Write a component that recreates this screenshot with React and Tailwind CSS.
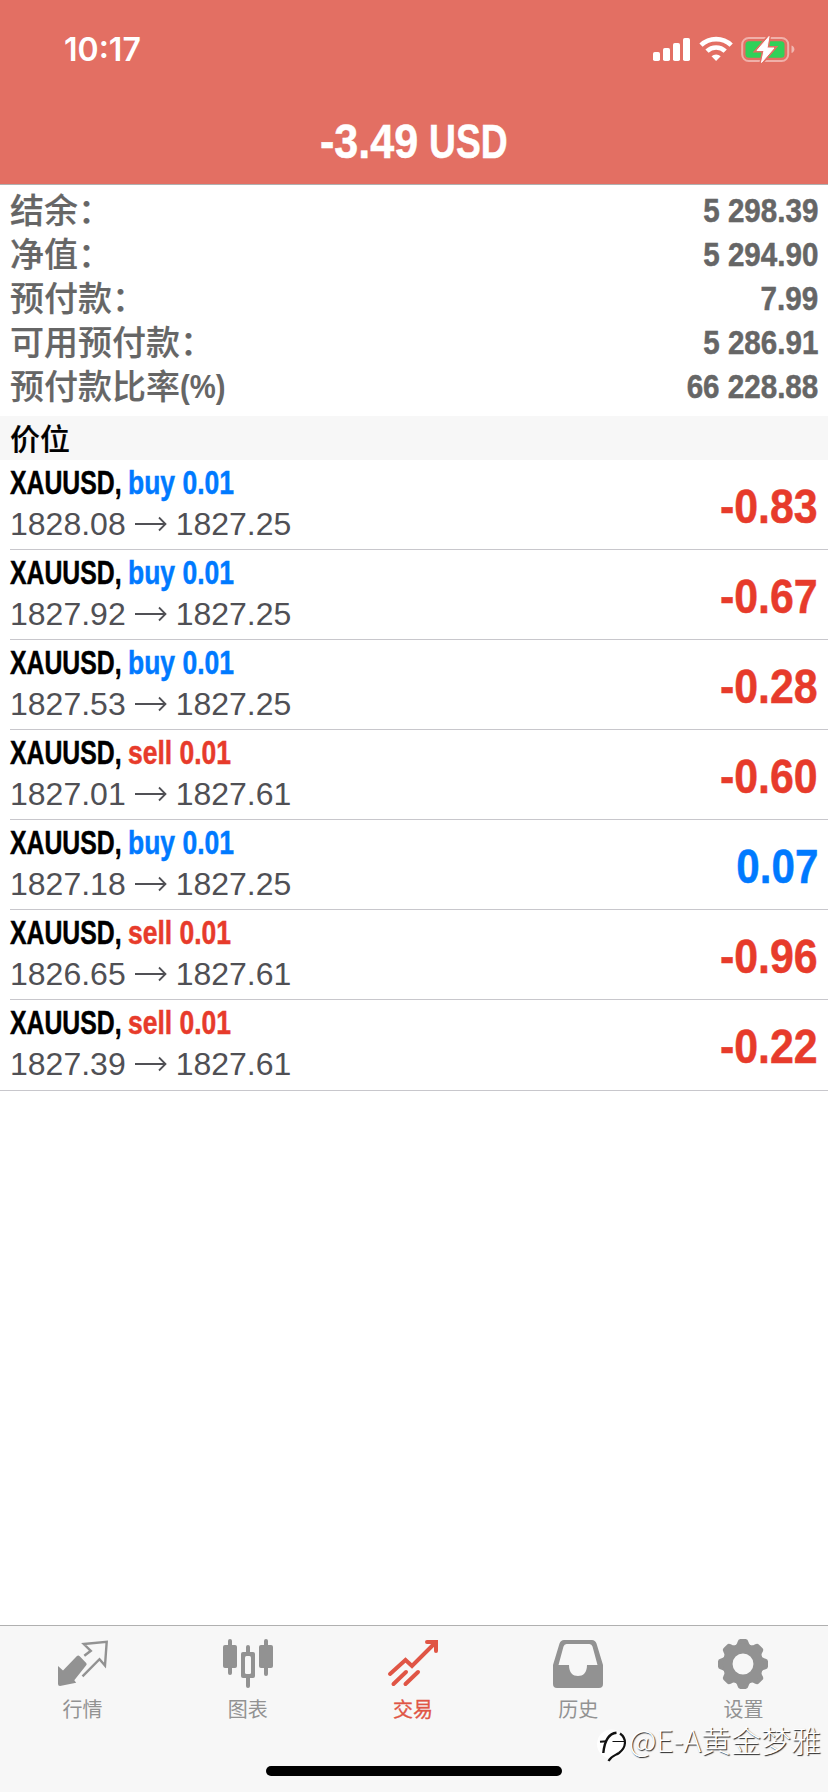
import clsx from "clsx";

const summary = [
  { label: "结余：", value: "5 298.39" },
  { label: "净值：", value: "5 294.90" },
  { label: "预付款：", value: "7.99" },
  { label: "可用预付款：", value: "5 286.91" },
  { label: "预付款比率", unit: "(%)", value: "66 228.88" },
];

const positions = [
  { side: "buy", open: "1828.08", now: "1827.25", profit: "-0.83" },
  { side: "buy", open: "1827.92", now: "1827.25", profit: "-0.67" },
  { side: "buy", open: "1827.53", now: "1827.25", profit: "-0.28" },
  { side: "sell", open: "1827.01", now: "1827.61", profit: "-0.60" },
  { side: "buy", open: "1827.18", now: "1827.25", profit: "0.07" },
  { side: "sell", open: "1826.65", now: "1827.61", profit: "-0.96" },
  { side: "sell", open: "1827.39", now: "1827.61", profit: "-0.22" },
];

// bold sans, squeezed horizontally with scale-x where it is used
const condensed = "font-['Liberation_Sans',sans-serif] font-bold whitespace-nowrap [-webkit-text-stroke:0.5px_currentColor]";

function StatusBar() {
  return (
    <div className="flex h-[100px] items-center justify-between pl-16 pr-[33px]">
      <span className="font-['Inter',sans-serif] text-[32px] font-semibold leading-none">10:17</span>
      <svg width="144" height="30" viewBox="0 0 144 30">
        <g fill="#fff">
          <rect x="2" y="17" width="7" height="9" rx="1.8" />
          <rect x="12" y="13" width="7" height="13" rx="1.8" />
          <rect x="22" y="8" width="7" height="18" rx="1.8" />
          <rect x="32" y="3" width="7" height="23" rx="1.8" />
        </g>
        <g fill="none" stroke="#fff" strokeWidth="4.6">
          <path d="M50 10.2a21.7 21.7 0 0 1 30.2 0" />
          <path d="M56 16.200a13 13 0 0 1 18.200 0" />
        </g>
        <path d="M65.100 26l-4.600-4.700a6.600 6.600 0 0 1 9.200 0z" fill="#fff" />
        <rect x="91.200" y="3" width="46" height="23" rx="6.500" fill="none" stroke="#fff" strokeOpacity=".45" strokeWidth="2" />
        <path d="M140.500 10.500c3.800 1 3.800 6.500 0 7.500z" fill="#fff" fillOpacity=".5" />
        <rect x="94.500" y="6.300" width="39" height="16.500" rx="3.500" fill="#30d158" />
        <path d="M118 1.500l-12 14h7l-2.500 12 12.500-14.500h-7z" fill="#fff" stroke="#e36f63" strokeWidth="4" />
        <path d="M118 1.500l-12 14h7l-2.500 12 12.500-14.500h-7z" fill="#fff" stroke="#fff" strokeWidth="1" strokeLinejoin="round" />
      </svg>
    </div>
  );
}

function Position({ side, open, now, profit, last }) {
  return (
    <div className={clsx("flex bg-white", last ? "h-[91px] border-b border-[#c8c7cc]" : "h-[90px] pl-[10px]")}>
      <div className={clsx("flex flex-1 justify-between pr-[10px]", last ? "pl-[10px]" : "border-b border-[#c8c7cc]")}>
        <div>
          <div className={clsx(condensed, "mt-[3px] flex text-[33.5px] leading-[40px]")}>
            <span className="w-[118px] origin-left scale-x-[0.74] text-black">XAUUSD,</span>
            <span className={clsx("w-[107px] origin-left scale-x-[0.79]", side === "buy" ? "text-[#007aff]" : "text-[#e73b2b]")}>
              {side} 0.01
            </span>
          </div>
          <div className="mt-px flex items-center font-['Liberation_Sans',sans-serif] text-[32px] leading-[40px] text-[#505055]">
            <span>{open}</span>
            <svg className="mx-[9px] -mt-px" width="32" height="16" viewBox="0 0 32 16" fill="none" stroke="#505055" strokeWidth="1.800">
              <path d="M0 8h30M24 1.500l6.500 6.500-6.500 6.500" />
            </svg>
            <span>{now}</span>
          </div>
        </div>
        <div
          className={clsx(
            condensed,
            "origin-right self-center pt-[3px] text-[49px] leading-none",
            profit[0] === "-" ? "scale-x-[0.875] text-[#e73b2b]" : "scale-x-[0.86] text-[#007aff]"
          )}
        >
          {profit}
        </div>
      </div>
    </div>
  );
}

function QuotesIcon() {
  return (
    <svg width="52" height="50" viewBox="0 0 52 50">
      <path d="M1 27l5 4.500L19.700 17.300q1.600-1.500 3 0l6.500 6.700q1 1.200 0 2.200L17.300 41.300l1.900 2.400L3 47q-2 0-2-2z" fill="#929292" />
      <path d="M27.300 16.800l6.500-5-7-6.800L49.700 2.900 48 26.500l-5.500-6.300L25.500 37.300" fill="none" stroke="#929292" strokeWidth="2.400" />
    </svg>
  );
}

function ChartIcon() {
  return (
    <svg width="52" height="50" viewBox="0 0 52 50" fill="#929292">
      <rect x="6" y="0" width="4" height="36" rx="2" />
      <rect x="1" y="6" width="14" height="23" rx="2" />
      <rect x="24" y="6" width="4" height="43" rx="2" />
      <rect x="19" y="13" width="14" height="26" rx="2" />
      <rect x="23" y="17" width="6" height="18" rx="1.5" fill="#f7f7f7" />
      <rect x="42" y="0" width="4" height="37" rx="2" />
      <rect x="37" y="6" width="14" height="23" rx="2" />
    </svg>
  );
}

function TradeIcon() {
  return (
    <svg width="52" height="50" viewBox="0 0 52 50" fill="none" stroke="#e05545" strokeWidth="4" strokeLinecap="round">
      <path d="M3 35l15.500-14 6.500 6L48 4" />
      <path d="M40 3h9v9" />
      <path d="M6.500 45L19 33M18.500 45L31 33" />
    </svg>
  );
}

function HistoryIcon() {
  return (
    <svg width="52" height="50" viewBox="0 0 52 50">
      <path
        fillRule="evenodd"
        fill="#929292"
        d="M1 26L7.500 4.500Q8.800 1 12 1h28q3.200 0 4.500 3.500L51 26v19q0 4-4 4H5q-4 0-4-4zM6.500 26h10.500c0 8 4 11 9 11s9-3 9-11h10.500L40.500 7.500Q39.700 5 37.500 5h-23q-2.200 0-3 2.500z"
      />
    </svg>
  );
}

function GearIcon() {
  const teeth = [0, 45, 90, 135, 180, 225, 270, 315];
  return (
    <svg width="52" height="50" viewBox="0 0 52 50" fill="#929292">
      {teeth.map((deg) => (
        <path key={deg} transform={`rotate(${deg} 26 25)`} d="M17 7.500C19.500 5.500 20 5 20.500 3Q21.300 0 23.300 0H28.700Q30.700 0 31.500 3C32 5 32.500 5.500 35 7.500z" />
      ))}
      <circle cx="26" cy="25" r="15.300" fill="none" stroke="#929292" strokeWidth="9.700" />
    </svg>
  );
}

const tabs = [
  { label: "行情", icon: QuotesIcon },
  { label: "图表", icon: ChartIcon },
  { label: "交易", icon: TradeIcon, active: true },
  { label: "历史", icon: HistoryIcon },
  { label: "设置", icon: GearIcon },
];

export default function App() {
  return (
    <div className="relative flex h-[1792px] w-[828px] flex-col bg-white">
      <header className="h-[185px] border-b border-[#b0b0b0] bg-[#e36f63] text-white">
        <StatusBar />
        <h1 className={clsx(condensed, "flex justify-center text-[49px] leading-[82px]")}>
          <span className="w-[109px] origin-left scale-x-[0.88]">-3.49</span>
          <span className="w-[79px] origin-left scale-x-[0.76]">USD</span>
        </h1>
      </header>

      <section className="h-[231px] bg-white pl-[10px] pr-[10px] pt-[3px]">
        {summary.map((row) => (
          <div key={row.label} className="flex h-11 justify-between text-[34px] leading-[42px] text-[#666]">
            <div className="flex">
              <span className="font-['Noto_Sans_CJK_SC',sans-serif] font-medium [-webkit-text-stroke:0.2px_currentColor]">{row.label}</span>
              {row.unit && (
                <span className="w-[46px] origin-left scale-x-[0.86] pt-px font-['Liberation_Sans',sans-serif] font-bold">{row.unit}</span>
              )}
            </div>
            <span className={clsx(condensed, "origin-right scale-x-[0.87] pt-px")}>{row.value}</span>
          </div>
        ))}
      </section>

      <div className="h-11 bg-[#f7f7f7] pl-[10px] font-['Noto_Sans_CJK_SC',sans-serif] text-[30px] font-medium leading-[42px] text-black [-webkit-text-stroke:0.2px_currentColor]">
        价位
      </div>

      <main className="flex-1">
        {positions.map((p, i) => (
          <Position key={i} {...p} last={i === positions.length - 1} />
        ))}
      </main>

      <nav className="flex h-[167px] border-t border-[#b0b0b0] bg-[#f7f7f7] pr-[2px]">
        {tabs.map(({ label, icon: Icon, active }) => (
          <div key={label} className="flex flex-1 flex-col items-center pt-[13px]">
            <Icon />
            <span
              className={clsx(
                "mt-[6px] font-['Noto_Sans_CJK_SC',sans-serif] text-[20px] leading-[28px]",
                active ? "text-[#e05545] [-webkit-text-stroke:0.3px_currentColor]" : "text-[#929292]"
              )}
            >
              {label}
            </span>
          </div>
        ))}
      </nav>

      <div className="absolute bottom-[16px] left-[266px] h-[10px] w-[296px] rounded-full bg-black" />

      <div className="absolute left-[597px] top-[1720px] flex items-start">
        <svg width="32" height="44" viewBox="0 0 32 44">
          <circle cx="14.500" cy="24" r="14.500" fill="#fff" />
          <g fill="none" stroke="#111">
            <path d="M6.300 33C7.500 21 11 13.500 19.500 12.700" strokeWidth="2.400" />
            <path d="M23 13.500c7 5 6.500 14-1 19.500-4 2.600-8 3-10.500 8" strokeWidth="2.200" />
            <path d="M3 21.800l7-.6" strokeWidth="2" />
            <path d="M15.500 21.500h12.500" strokeWidth="1" />
          </g>
        </svg>
        <span className="-mt-[2px] font-['Noto_Sans_CJK_SC',sans-serif] text-[30px] font-light leading-[42px] text-white [text-shadow:1px_1px_1px_#222]">
          @E-A黄金梦雅
        </span>
      </div>
    </div>
  );
}
